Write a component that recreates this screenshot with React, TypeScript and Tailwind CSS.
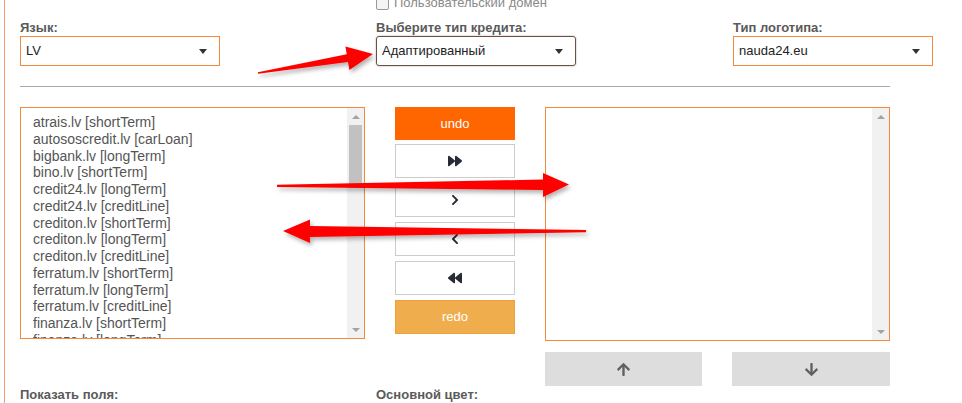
import React from 'react';
import { FaForward, FaBackward, FaChevronRight, FaChevronLeft, FaArrowUp, FaArrowDown } from 'react-icons/fa';

const items = [
  'atrais.lv [shortTerm]',
  'autososcredit.lv [carLoan]',
  'bigbank.lv [longTerm]',
  'bino.lv [shortTerm]',
  'credit24.lv [longTerm]',
  'credit24.lv [creditLine]',
  'crediton.lv [shortTerm]',
  'crediton.lv [longTerm]',
  'crediton.lv [creditLine]',
  'ferratum.lv [shortTerm]',
  'ferratum.lv [longTerm]',
  'ferratum.lv [creditLine]',
  'finanza.lv [shortTerm]',
  'finanza.lv [longTerm]',
  'finanza.lv [creditLine]',
];

const Caret = () => (
  <span className="w-0 h-0 border-l-[4px] border-r-[4px] border-t-[5px] border-l-transparent border-r-transparent border-t-[#333]" />
);

const Select = ({ value, focused }: { value: string; focused?: boolean }) => (
  <div
    className={
      focused
        ? 'flex items-center justify-between h-[30px] w-[200px] border border-[#6b5040] rounded-[3px] shadow-[0_0_2px_rgba(0,0,0,0.35)] pl-[5px] pr-[12px] text-[13px] text-[#222]'
        : 'flex items-center justify-between h-[30px] w-[200px] border border-[#f5883a] pl-[5px] pr-[12px] text-[13px] text-[#222]'
    }
  >
    <span>{value}</span>
    <Caret />
  </div>
);

const Scrollbar = ({ thumb }: { thumb?: boolean }) => (
  <div className="w-[17px] bg-[#f1f1f1] flex flex-col items-center">
    <div className="h-[17px] flex items-center justify-center">
      <span className="w-0 h-0 border-l-[4px] border-r-[4px] border-b-[4px] border-l-transparent border-r-transparent border-b-[#a3a3a3]" />
    </div>
    {thumb && <div className="w-[13px] h-[63px] bg-[#c1c1c1]" />}
    <div className="flex-1" />
    <div className="h-[17px] flex items-center justify-center">
      <span className="w-0 h-0 border-l-[4px] border-r-[4px] border-t-[4px] border-l-transparent border-r-transparent border-t-[#a3a3a3]" />
    </div>
  </div>
);

const MoveBtn = ({ children }: { children: React.ReactNode }) => (
  <div className="h-[34px] border border-[#ccc] bg-white flex items-center justify-center text-[#262b36]">
    {children}
  </div>
);

const Arrows = () => (
  <svg className="absolute inset-0 pointer-events-none" width="962" height="403" viewBox="0 0 962 403">
    <defs>
      <filter id="arrowShadow" x="-10%" y="-50%" width="120%" height="200%">
        <feDropShadow dx="2" dy="3" stdDeviation="2" floodColor="#000" floodOpacity="0.3" />
      </filter>
    </defs>
    <g fill="#ff0000" filter="url(#arrowShadow)">
      <polygon points="257.9,72.3 346.8,54.3 345.4,46.4 373,54 349.4,70 348,62.1 258.1,73.7" />
      <polygon points="277,184.8 543,179.5 543,173 569,184.5 543,197 543,190 277,187" />
      <polygon points="283,231 310,219.5 310,226 586,230 586,232.2 310,237 310,243" />
    </g>
  </svg>
);

export default function App() {
  return (
    <div className="relative h-[403px] w-[962px] overflow-hidden bg-white" style={{ fontFamily: '"Liberation Sans", Arial, sans-serif' }}>
      <div className="ml-[4px] h-full border-l border-[#f5a068] pl-[15px] flex flex-col">
        {/* custom domain checkbox */}
        <div className="flex items-center gap-[5px] ml-[356px] -mt-[6px] h-[18px]">
          <span className="w-[13px] h-[13px] border border-[#999] rounded-[2px] bg-[#f4f4f4]" />
          <span className="text-[13px] text-[#8a8a8a]">Пользовательский домен</span>
        </div>

        {/* selects */}
        <div className="flex -mt-[4px]">
          <div className="w-[356px] pt-[12px]">
            <div className="text-[13px] leading-[15px] font-bold text-[#5a5a5a]">Язык:</div>
            <div className="mt-[1px]"><Select value="LV" /></div>
          </div>
          <div className="w-[357px] pt-[12px]">
            <div className="text-[13px] leading-[15px] font-bold text-[#5a5a5a]">Выберите тип кредита:</div>
            <div className="mt-[1px]"><Select value="Адаптированный" focused /></div>
          </div>
          <div className="pt-[12px]">
            <div className="text-[13px] leading-[15px] font-bold text-[#5a5a5a]">Тип логотипа:</div>
            <div className="mt-[1px]"><Select value="nauda24.eu" /></div>
          </div>
        </div>

        <div className="w-[870px] mt-[20px] border-t border-[#aaa]" />

        {/* lists */}
        <div className="flex items-start gap-[30px] mt-[20px] w-[870px]">
          <div className="w-[345px] h-[232px] border border-[#f5883a] flex">
            <div className="flex-1 overflow-hidden pt-[6px] pl-[12px] text-[14px] leading-[16.75px] text-[#555]">
              {items.map((it) => (
                <div key={it} className="whitespace-nowrap">{it}</div>
              ))}
            </div>
            <Scrollbar thumb />
          </div>

          <div className="w-[120px] flex flex-col">
            <div className="h-[33px] bg-[#ff6600] text-white text-[13px] flex items-center justify-center">undo</div>
            <div className="flex flex-col gap-[5px] mt-[4px]">
              <MoveBtn><FaForward size={14} /></MoveBtn>
              <MoveBtn><FaChevronRight size={12} /></MoveBtn>
              <MoveBtn><FaChevronLeft size={12} /></MoveBtn>
              <MoveBtn><FaBackward size={14} /></MoveBtn>
              <div className="h-[34px] bg-[#f0ad4e] border border-[#eea236] text-white text-[13px] flex items-center justify-center">redo</div>
            </div>
          </div>

          <div className="w-[345px] h-[234px] border border-[#f5883a] flex">
            <div className="flex-1" />
            <Scrollbar />
          </div>
        </div>

        <div className="flex gap-[30px] ml-[525px] mt-[11px]">
          <div className="w-[157px] h-[34px] bg-[#ddd] flex items-center justify-center text-[#606060]">
            <FaArrowUp size={15} />
          </div>
          <div className="w-[158px] h-[34px] bg-[#ddd] flex items-center justify-center text-[#606060]">
            <FaArrowDown size={15} />
          </div>
        </div>

        <div className="flex mt-[1px]">
          <div className="w-[356px] text-[13px] leading-[15px] font-bold text-[#5a5a5a]">Показать поля:</div>
          <div className="text-[13px] leading-[15px] font-bold text-[#5a5a5a]">Основной цвет:</div>
        </div>
      </div>
      <Arrows />
    </div>
  );
}
